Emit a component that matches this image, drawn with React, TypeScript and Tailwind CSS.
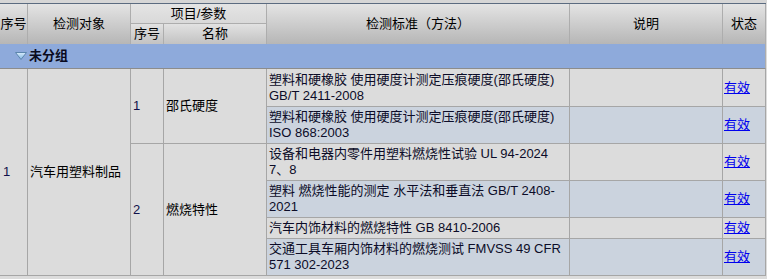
const font = { fontFamily: '"Liberation Sans", "Noto Sans CJK SC", sans-serif' };

type Std = { text: string; alt: boolean };

const standards: Std[] = [
  { text: '塑料和硬橡胶 使用硬度计测定压痕硬度(邵氏硬度) GB/T 2411-2008', alt: false },
  { text: '塑料和硬橡胶 使用硬度计测定压痕硬度(邵氏硬度) ISO 868:2003', alt: true },
  { text: '设备和电器内零件用塑料燃烧性试验 UL 94-2024 7、8', alt: false },
  { text: '塑料 燃烧性能的测定 水平法和垂直法 GB/T 2408-2021', alt: true },
  { text: '汽车内饰材料的燃烧特性 GB 8410-2006', alt: false },
  { text: '交通工具车厢内饰材料的燃烧测试 FMVSS 49 CFR 571 302-2023', alt: true },
];

const rowStarts = ['row-start-4', 'row-start-5', 'row-start-6', 'row-start-7', 'row-start-8', 'row-start-9'];

function TriangleIcon() {
  return (
    <svg width="12" height="8" viewBox="0 0 12 8" className="mr-[2px]">
      <defs>
        <linearGradient id="tri" x1="0" y1="0" x2="0" y2="1">
          <stop offset="0" stopColor="#d8ecfb" />
          <stop offset="1" stopColor="#7fb4e0" />
        </linearGradient>
      </defs>
      <path d="M0.5 0.5 H11.5 L6 7.5 Z" fill="url(#tri)" stroke="#5d86ad" strokeWidth="1" strokeLinejoin="round" />
    </svg>
  );
}

export default function App() {
  return (
    <div className="w-[767px] h-[279px] overflow-hidden bg-[#dcdcdc] text-[13px] leading-4 text-black" style={font}>
      <div className="h-[3px] bg-[#d6d6d6]" />
      <div className="h-px w-[766px] bg-[#5b6b80]" />
      <div className="grid w-[766px] grid-cols-[28px_103px_33px_103px_303px_153px_43px] grid-rows-[20px_20px_25px_38px_37px_37px_37px_21px_37px]">
        {/* header */}
        <div className="col-start-1 row-start-1 row-span-2 flex items-center justify-center border-r border-[#adadad] bg-linear-to-b from-[#e4e4e4] to-[#b6b6b6]">序号</div>
        <div className="col-start-2 row-start-1 row-span-2 flex items-center justify-center border-r border-[#adadad] bg-linear-to-b from-[#e4e4e4] to-[#b6b6b6]">检测对象</div>
        <div className="col-start-3 col-span-2 row-start-1 flex items-center justify-center border-r border-b border-[#adadad] bg-linear-to-b from-[#e4e4e4] to-[#d9d9d9]">项目/参数</div>
        <div className="col-start-3 row-start-2 flex items-center justify-center border-r border-[#adadad] bg-linear-to-b from-[#e2e2e2] to-[#c2c2c2]">序号</div>
        <div className="col-start-4 row-start-2 flex items-center justify-center border-r border-[#adadad] bg-linear-to-b from-[#e2e2e2] to-[#c2c2c2]">名称</div>
        <div className="col-start-5 row-start-1 row-span-2 flex items-center justify-center border-r border-[#adadad] bg-linear-to-b from-[#e4e4e4] to-[#b6b6b6]">检测标准（方法）</div>
        <div className="col-start-6 row-start-1 row-span-2 flex items-center justify-center border-r border-[#adadad] bg-linear-to-b from-[#e4e4e4] to-[#b6b6b6]">说明</div>
        <div className="col-start-7 row-start-1 row-span-2 flex items-center justify-center border-r border-[#adadad] bg-linear-to-b from-[#e4e4e4] to-[#b6b6b6]">状态</div>

        {/* group row */}
        <div className="col-span-7 row-start-3 flex items-center border-r border-b border-r-[#adadad] border-b-[#8c8c8c] bg-[#8eaadb] pl-[15px] font-bold text-[#0a0a20]">
          <TriangleIcon />
          未分组
        </div>

        {/* merged cells */}
        <div className="col-start-1 row-start-4 row-span-6 flex items-center border-r border-b border-[#a6a6a6] pl-[3px] text-[#10104a]">1</div>
        <div className="col-start-2 row-start-4 row-span-6 flex items-center border-r border-b border-[#a6a6a6] pl-[2px]">汽车用塑料制品</div>
        <div className="col-start-3 row-start-4 row-span-2 flex items-center border-r border-b border-[#a6a6a6] pl-[2px] text-[#10104a]">1</div>
        <div className="col-start-4 row-start-4 row-span-2 flex items-center border-r border-b border-[#a6a6a6] pl-[2px]">邵氏硬度</div>
        <div className="col-start-3 row-start-6 row-span-4 flex items-center border-r border-b border-[#a6a6a6] pl-[2px] text-[#10104a]">2</div>
        <div className="col-start-4 row-start-6 row-span-4 flex items-center border-r border-b border-[#a6a6a6] pl-[2px]">燃烧特性</div>

        {standards.map((s, i) => (
          <div key={i} className={`contents`}>
            <div className={`col-start-5 ${rowStarts[i]} flex items-center border-r border-b border-[#a6a6a6] px-[2px] ${s.alt ? 'bg-[#cbd3de]' : 'bg-[#dcdcdc]'}`}>
              <span className="text-[#0c0c28]">{s.text}</span>
            </div>
            <div className={`col-start-6 ${rowStarts[i]} border-r border-b border-[#a6a6a6] ${s.alt ? 'bg-[#cbd3de]' : 'bg-[#dcdcdc]'}`} />
            <div className={`col-start-7 ${rowStarts[i]} flex items-center border-r border-b border-[#a6a6a6] pl-[1px] ${s.alt ? 'bg-[#cbd3de]' : 'bg-[#dcdcdc]'}`}>
              <a href="#" className="text-[#0000ee] underline">有效</a>
            </div>
          </div>
        ))}
      </div>
    </div>
  );
}
